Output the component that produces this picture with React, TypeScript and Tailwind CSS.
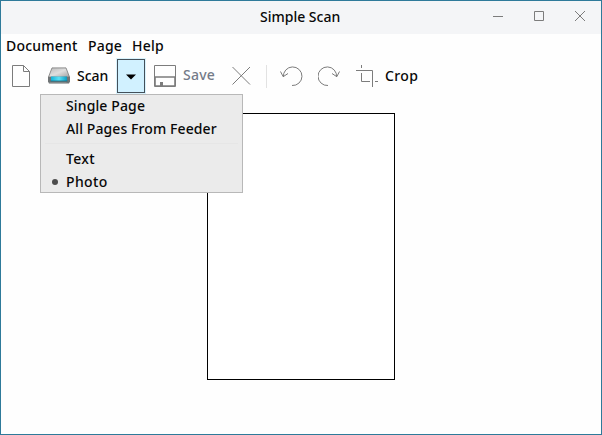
import type { ReactNode } from "react";

function Icon({ w, h, className = "", children }: { w: number; h: number; className?: string; children: ReactNode }) {
  return (
    <svg width={w} height={h} viewBox={`0 0 ${w} ${h}`} fill="none" stroke="#7c7c7c" className={`block shrink-0 ${className}`}>
      {children}
    </svg>
  );
}

function ScannerIcon() {
  return (
    <svg width="22" height="17" viewBox="0 0 22 17" className="ml-[17px] mt-[9px] block shrink-0">
      <defs>
        <linearGradient id="lid" x1="0" y1="0" x2="1" y2="1">
          <stop offset="0" stopColor="#b9b9b9" />
          <stop offset=".5" stopColor="#dedede" />
          <stop offset="1" stopColor="#a2a2a2" />
        </linearGradient>
        <linearGradient id="glass" x1="0" y1="0" x2="1" y2="0">
          <stop offset="0" stopColor="#16b4d8" />
          <stop offset=".5" stopColor="#5ce0f5" />
          <stop offset="1" stopColor="#0d9cc2" />
        </linearGradient>
      </defs>
      <path d="M0 10h22v4.5l-1 2H1l-1-2z" fill="#6f7476" />
      <path d="M4 .9h14L21.5 10H.5z" fill="url(#lid)" stroke="#777" strokeWidth=".8" />
      <path d="M3 9.5h16v4.5H3z" fill="url(#glass)" />
      <path d="M2.5 14h17" stroke="#136f89" strokeWidth=".8" />
      <path d="M1.5 15.6h17" stroke="#85898b" />
    </svg>
  );
}

function TitleBar() {
  return (
    <header className="flex h-[33px] shrink-0 bg-[#f4f5f7]">
      <h1 className="ml-[259px] mt-[6px] w-[233px] text-sm/[20px] font-medium">Simple Scan</h1>
      <Icon w={10} h={1} className="mt-[15px]"><path d="M0 .5h10" /></Icon>
      <Icon w={10} h={10} className="ml-[31px] mt-[10px]"><path d="M.5.5h9v9h-9z" /></Icon>
      <Icon w={10} h={10} className="ml-[31px] mt-[10px]"><path d="M0 0l10 10M10 0L0 10" /></Icon>
    </header>
  );
}

function MenuBar() {
  return (
    <nav className="flex h-[24px] shrink-0 pl-[5px] text-sm/[24px] font-medium">
      <span className="w-[82px] tracking-[0.2px]">Document</span>
      <span className="w-[44px] tracking-[0.2px]">Page</span>
      <span className="tracking-[0.2px]">Help</span>
    </nav>
  );
}

function ScanMenu() {
  return (
    <div className="absolute -left-[77px] top-[35px] z-10 h-[99px] w-[203px] border border-[#b8b8b8] bg-[#ebebeb] text-sm/[23px] font-medium whitespace-nowrap">
      <div className="-mt-px pl-[25px] tracking-[0.13px]">Single Page</div>
      <div className="pl-[25px] tracking-[0.1px]">All Pages From Feeder</div>
      <div className="mx-1 mb-[3px] mt-[3px] h-px bg-[#e6e6e6]" />
      <div className="mt-[2px] pl-[25px] tracking-[0.3px]">Text</div>
      <div className="flex items-center tracking-[0.4px]">
        <span className="ml-[11px] mr-2 size-[6px] rounded-full bg-[#4d4d4d]" />
        Photo
      </div>
    </div>
  );
}

function Toolbar() {
  return (
    <div className="flex h-[36px] shrink-0 text-sm/[20px] font-medium">
      <Icon w={19} h={23} className="ml-[11px] mt-[7px]">
        <path d="M.5.5h11l6 6v15H.5zM11.5.5v6h6" />
      </Icon>
      <ScannerIcon />
      <span className="ml-[7px] mt-[8px] w-[40px]">Scan</span>
      <div className="relative mt-px h-[34px] w-[28px]">
        <button className="flex size-full items-center justify-center border border-[#43505a] bg-[#d1f1ff] shadow-[0_0_0_1px_#d9f3fd]">
          <svg width="10" height="6" viewBox="0 0 10 6" className="mt-px block"><path d="M0 .5h10L5 5.5z" fill="#000" /></svg>
        </button>
        <ScanMenu />
      </div>
      <Icon w={22} h={22} className="ml-[9px] mt-[7px]">
        <path d="M.5.5h21v21H.5z" />
        <path d="M1 12h20M1 21h20M1 12v9M21 12v9" strokeWidth="1.6" />
        <path d="M7.5 17v4" strokeWidth="3" />
      </Icon>
      <span className="ml-[7px] mt-[7px] w-[49px] tracking-[0.25px] text-[#747b88]">Save</span>
      <Icon w={19} h={19} className="mt-[8px]"><path d="M.5 1l17.5 17.5M18 1L.5 18.5" /></Icon>
      <div className="ml-[15px] mt-[7px] h-[23px] w-px bg-[#e2e2e2]" />
      <Icon w={23} h={22} className="ml-[13px] mt-[7px]">
        <path d="M12 20.5A9.3 9.3 0 1 0 3.4 12M.5 6.5l2.7 5.2L8 8.5" />
      </Icon>
      <Icon w={23} h={22} className="ml-[15px] mt-[7px]">
        <path d="M10 20.5A9.3 9.3 0 1 1 18.6 12M21.5 6.5l-2.7 5.2L14 8.5" />
      </Icon>
      <Icon w={23} h={23} className="ml-[15px] mt-[6px]">
        <path d="M0 6.5h16.5V23M5.5 1v3M5.5 9v8.5H14M19 17.5h3" />
      </Icon>
      <span className="ml-[6px] mt-[8px] tracking-[0.35px]">Crop</span>
    </div>
  );
}

export default function App() {
  return (
    <main className="flex h-[435px] w-[602px] flex-col overflow-hidden border border-[#2e7a9a] bg-[#fefefe] font-['Noto_Sans','Open_Sans',sans-serif] text-[#080808]">
      <TitleBar />
      <MenuBar />
      <Toolbar />
      <section className="pl-[206px] pt-[19px]">
        <div className="h-[267px] w-[188px] border border-black bg-white" />
      </section>
    </main>
  );
}
